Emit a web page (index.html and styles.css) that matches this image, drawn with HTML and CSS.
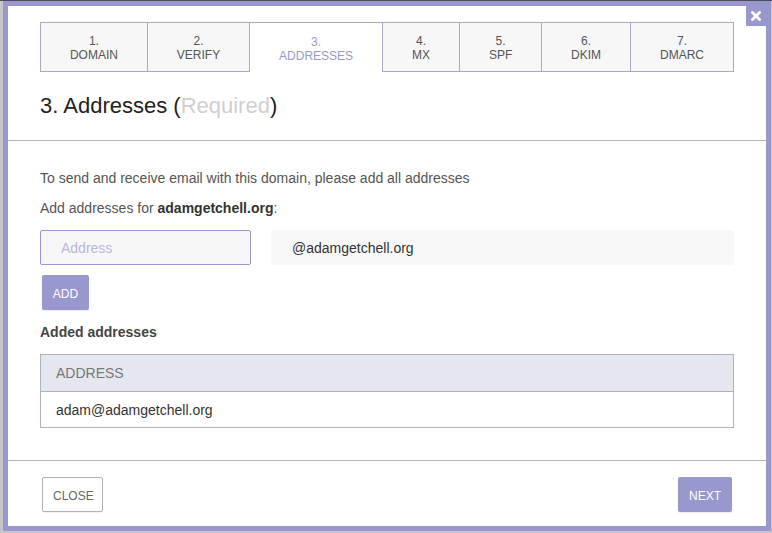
FILE: index.html
```html
<!DOCTYPE html>
<html>
<head>
<meta charset="utf-8">
<link rel="stylesheet" href="styles.css">
</head>
<body>
<div class="backdrop">
  <div class="modal">
    <button class="close-x" aria-label="Close">
      <svg width="10" height="10" viewBox="0 0 10 10"><path d="M1.5 1.5 L8.5 8.5 M8.5 1.5 L1.5 8.5" stroke="#fff" stroke-width="2.8" stroke-linecap="square"/></svg>
    </button>
    <div class="modal-header">
      <div class="steps">
        <div class="step"><span>1.</span><span>DOMAIN</span></div>
        <div class="step"><span>2.</span><span>VERIFY</span></div>
        <div class="step active"><span>3.</span><span>ADDRESSES</span></div>
        <div class="step"><span>4.</span><span>MX</span></div>
        <div class="step"><span>5.</span><span>SPF</span></div>
        <div class="step"><span>6.</span><span>DKIM</span></div>
        <div class="step"><span>7.</span><span>DMARC</span></div>
      </div>
      <h2 class="title">3. Addresses (<span class="req">Required</span>)</h2>
    </div>
    <div class="modal-body">
      <p class="line">To send and receive email with this domain, please add all addresses</p>
      <p class="line second">Add addresses for <b>adamgetchell.org</b>:</p>
      <div class="addr-row">
        <input class="addr-input" type="text" placeholder="Address">
        <div class="domain">@adamgetchell.org</div>
      </div>
      <button class="btn primary add">ADD</button>
      <div class="sub">Added addresses</div>
      <div class="table">
        <div class="th">ADDRESS</div>
        <div class="td">adam@adamgetchell.org</div>
      </div>
    </div>
    <div class="modal-footer">
      <button class="btn outline">CLOSE</button>
      <button class="btn primary next">NEXT</button>
    </div>
  </div>
</div>
</body>
</html>
```

FILE: styles.css
```css
* { box-sizing: border-box; }
html, body { margin: 0; padding: 0; }
body {
  width: 772px;
  height: 533px;
  background: #c6c6c8;
  font-family: "Liberation Sans", Arial, sans-serif;
  overflow: hidden;
}
.backdrop {
  border-top: 1px solid #4a4f5a;
  height: 533px;
}
.modal {
  position: relative;
  margin: 0 1px 0 3px;
  width: 768px;
  height: 530px;
  border: 5px solid #9898cf;
  background: #fff;
  display: flex;
  flex-direction: column;
}
.close-x {
  position: absolute;
  top: 0;
  right: 0;
  width: 20px;
  height: 20px;
  border: 0;
  padding: 0;
  background: #9898cf;
  display: flex;
  align-items: center;
  justify-content: center;
}
.modal-header {
  padding: 16px 32px 0;
  border-bottom: 1px solid #b3b3c6;
  height: 135px;
}
.steps {
  display: flex;
  height: 50px;
  border: 1px solid #a9a9c4;
  background: #f7f7f7;
}
.step {
  flex: 1 1 auto;
  padding: 2px 10px 0;
  display: flex;
  flex-direction: column;
  align-items: center;
  justify-content: center;
  font-size: 12px;
  line-height: 14px;
  color: #555;
  border-left: 1px solid #a9a9c4;
}
.step:first-child { border-left: 0; }
.step.active {
  background: #fff;
  color: #9898cf;
  margin-bottom: -1px;
}
.title {
  margin: 21px 0 0;
  font-size: 22px;
  line-height: 26px;
  font-weight: normal;
  color: #222;
}
.req { color: #cfcfcf; }
.modal-body {
  padding: 27px 32px 0;
  height: 320px;
  border-bottom: 1px solid #b3b3c6;
}
.line {
  margin: 0;
  font-size: 14px;
  line-height: 20px;
  color: #555;
}
.line.second { margin-top: 10px; }
.line b { color: #333; }
.addr-row {
  margin-top: 12px;
  display: grid;
  grid-template-columns: 211px 1fr;
  gap: 20px;
}
.addr-input {
  height: 35px;
  border: 1px solid #9898d8;
  border-radius: 2px;
  background: #f7f7f7;
  padding: 0 20px;
  font-family: inherit;
  font-size: 14px;
  color: #333;
  outline: none;
}
.addr-input::placeholder { color: #b8b8dc; }
.domain {
  height: 35px;
  background: #f8f8f8;
  border-radius: 2px;
  padding: 0 21px;
  display: flex;
  align-items: center;
  font-size: 14px;
  color: #333;
}
.btn {
  font-family: inherit;
  font-size: 12px;
  height: 35px;
  border-radius: 2px;
  padding: 2px 10px 0;
  cursor: pointer;
}
.btn.primary {
  background: #9898cf;
  color: #fff;
  border: 0;
  box-shadow: 0 1px 1px rgba(0,0,0,0.08);
}
.add {
  display: block;
  margin: 10px 0 0 2px;
  width: 47px;
}
.sub {
  margin-top: 12px;
  font-size: 14px;
  line-height: 20px;
  font-weight: bold;
  color: #444;
}
.table {
  margin-top: 12px;
  border: 1px solid #b0b0c0;
}
.th {
  height: 37px;
  background: #e4e7f0;
  border-bottom: 1px solid #b0b0c0;
  padding: 0 15px;
  display: flex;
  align-items: center;
  font-size: 14px;
  color: #777;
}
.td {
  height: 35px;
  padding: 0 15px;
  display: flex;
  align-items: center;
  font-size: 14px;
  color: #333;
}
.modal-footer {
  flex: 1;
  display: flex;
  justify-content: space-between;
  align-items: flex-start;
  padding: 16px 34px 0;
}
.btn.outline {
  background: #fff;
  color: #666;
  border: 1px solid #b0b0b8;
  width: 61px;
  box-shadow: 0 1px 1px rgba(0,0,0,0.06);
}
.next { width: 54px; }
```
